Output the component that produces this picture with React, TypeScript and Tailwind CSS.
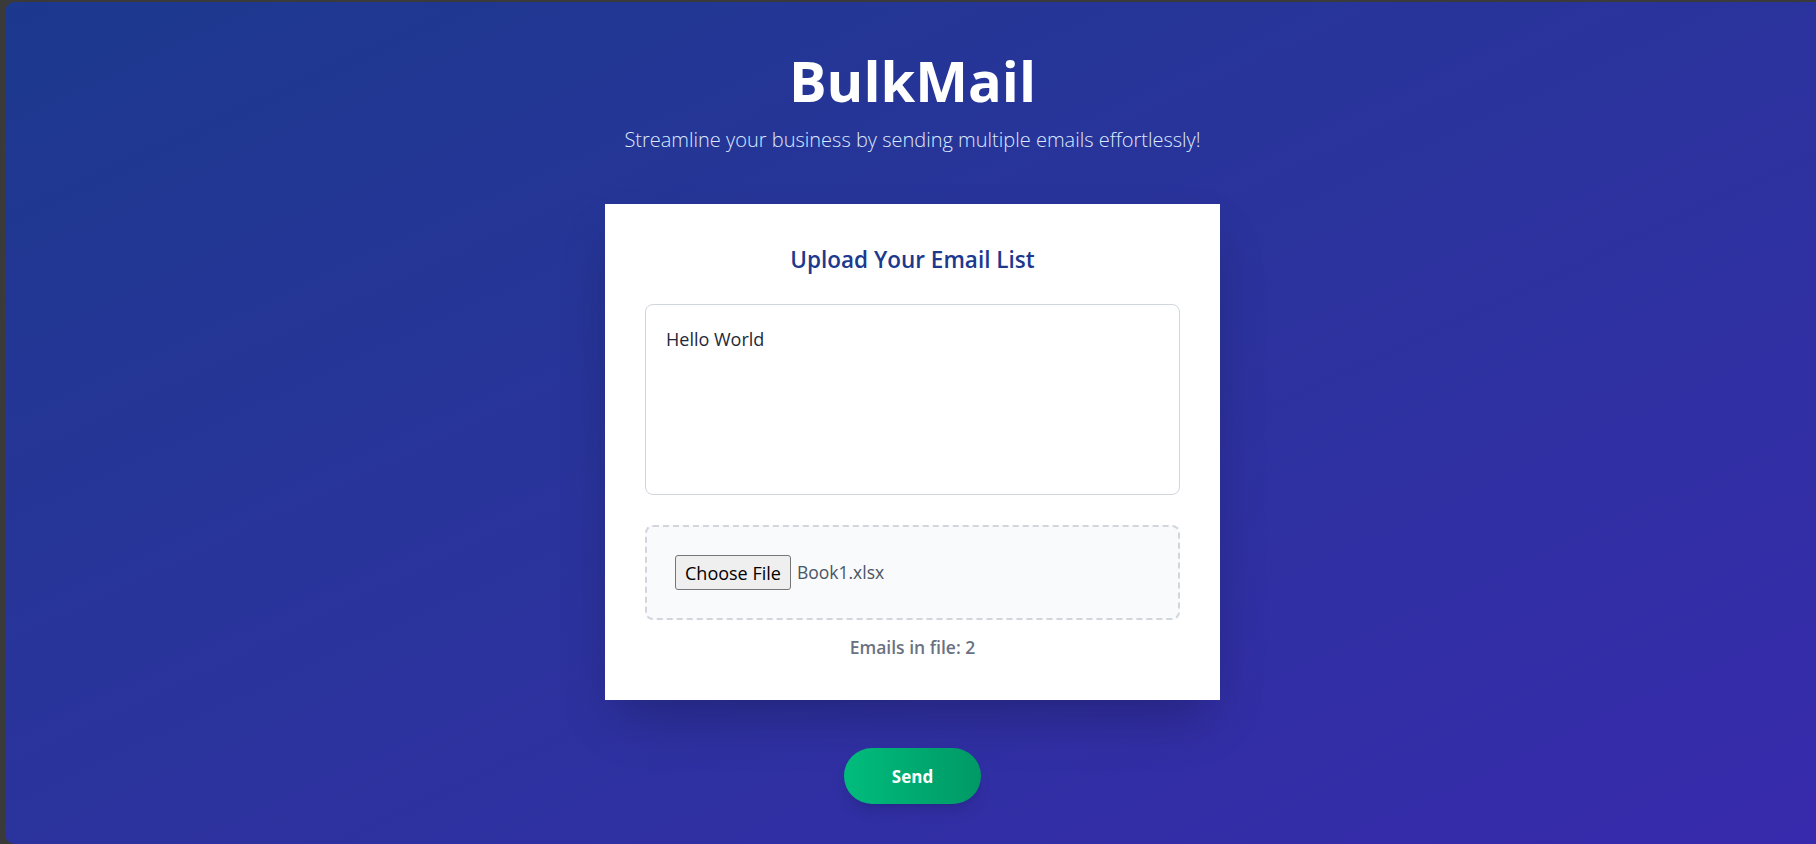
export default function App() {
  return (
    <div className="h-screen bg-[#3a3a3a] pt-[2px] pl-[5px] flex">
      <div className="flex-1 rounded-l-[10px] bg-linear-to-br from-blue-900 to-indigo-800 flex flex-col items-center pt-[50px] pl-1 font-['Open_Sans',sans-serif]">
        <h1 className="text-[56px] leading-none font-bold text-white">BulkMail</h1>
        <p className="mt-[18px] text-xl font-light text-blue-100">
          Streamline your business by sending multiple emails effortlessly!
        </p>

        <div className="mt-[50px] w-[615px] bg-white p-10 shadow-2xl">
          <h2 className="text-[22.5px] leading-8 font-semibold text-blue-900 text-center">
            Upload Your Email List
          </h2>
          <textarea
            defaultValue="Hello World"
            className="mt-7 block w-full h-[191px] resize-none rounded-lg border border-gray-300 p-5 text-lg text-gray-800 outline-none"
          />
          <div className="mt-[30px] flex items-center rounded-lg border-2 border-dashed border-gray-300 bg-gray-50 p-7">
            <span className="flex h-[35px] items-center rounded-[3px] border border-[#767676] bg-[#efefef] px-[9px] text-lg text-black">
              Choose File
            </span>
            <span className="ml-1.5 text-[17.5px] text-gray-600">Book1.xlsx</span>
          </div>
          <p className="mt-3.5 text-center text-[17.5px] font-semibold text-gray-500">Emails in file: 2</p>
        </div>

        <button className="mt-12 h-14 rounded-full bg-linear-to-r from-emerald-500 to-emerald-600 px-12 text-[17px] font-bold text-white shadow-lg">
          Send
        </button>
      </div>
    </div>
  );
}
